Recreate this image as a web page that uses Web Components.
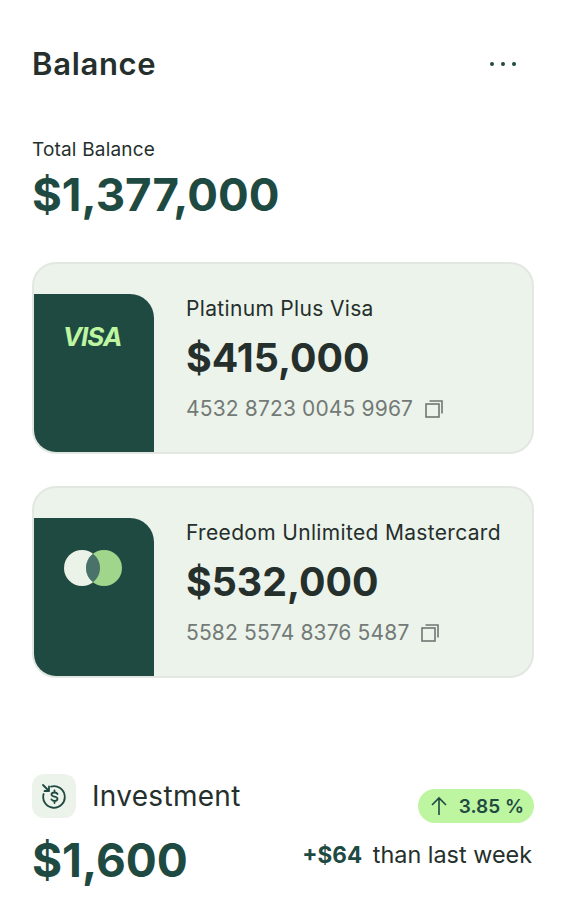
<!DOCTYPE html>
<html lang="en">
<head>
<meta charset="utf-8">
<title>Balance</title>
<style>
  html, body { margin: 0; background: #fff; }
  body { font-family: Inter, "Liberation Sans", sans-serif; color: #252f2c; }
</style>
</head>
<body>
<balance-panel>
  <bank-card name="Platinum Plus Visa" amount="$415,000" number="4532 8723 0045 9967">
    <span slot="logo" class="visa" style="font:italic 700 26px/1 Inter,sans-serif;letter-spacing:-1px;margin-left:-2px;color:#bdf5a0">VISA</span>
  </bank-card>
  <bank-card name="Freedom Unlimited Mastercard" amount="$532,000" number="5582 5574 8376 5487">
    <svg slot="logo" style="margin-top:2px" width="58" height="36" viewBox="0 0 58 36">
      <circle cx="18" cy="18" r="18" fill="#ebf2e8"/>
      <circle cx="40" cy="18" r="18" fill="#9fd68c"/>
      <path d="M29 3.700a18 18 0 0 1 0 28.600a18 18 0 0 1 0-28.600z" fill="#4a716a"/>
    </svg>
  </bank-card>
  <invest-row></invest-row>
</balance-panel>

<script>
class BankCard extends HTMLElement {
  constructor() {
    super();
    this.attachShadow({ mode: "open" });
    this.shadowRoot.innerHTML = `
     <style>
        :host {
            display:flex;
            box-sizing:border-box;
            height:192px;
            background:#ecf3ea;
            border:2px solid #e3e7e2;
            border-radius:24px;
            padding-top:30px;
            overflow:hidden;
        }
        #logo {
            flex:none;
            box-sizing:border-box;
            width:120px;
            background:#1f4a42;
            border-radius:0 24px 0 0;
            padding:30px 2px 0 0;
            display:flex;
            justify-content:center;
            align-items:flex-start;
        }
        #info {
            margin-left:32px;
            white-space:nowrap;
        }
        #name {
            font-size:21px;
            font-weight:400;
            letter-spacing:.33px;
            line-height:28px;
            margin-top:1px;
            color:#252f2c;
        }
        #amount {
            font-size:39.300px;
            line-height:48px;
            font-weight:700;
            margin-top:11px;
            color:#252f2c;
        }
        #number {
            display:flex;
            align-items:center;
            gap:12px;
            font-size:21px;
            font-weight:400;
            letter-spacing:.15px;
            line-height:28px;
            margin-top:13px;
            color:#737a77;
        }
     </style>
     <div id="logo"><slot name="logo"></slot></div>
     <div id="info">
        <div id="name">${this.getAttribute("name")}</div>
        <div id="amount">${this.getAttribute("amount")}</div>
        <div id="number">
            <span>${this.getAttribute("number")}</span>
            <svg width="18" height="18" viewBox="0 0 18 18" fill="none" stroke="#6f7673" stroke-width="1.600">
              <rect x="1" y="4" width="13" height="13"/>
              <path d="M4.500 1h12.500v12.500"/>
            </svg>
        </div>
     </div>
    `;
  }
}

class InvestRow extends HTMLElement {
  constructor() {
    super();
    this.attachShadow({ mode: "open" });
    this.shadowRoot.innerHTML = `
     <style>
        :host {
            display:flex;
            justify-content:space-between;
            margin-top:96px;
        }
        #label {
            display:flex;
            align-items:center;
            gap:16px;
            font-size:28px;
            font-weight:400;
            letter-spacing:.3px;
            line-height:44px;
            color:#252f2c;
        }
        #icon {
            width:44px;
            height:44px;
            border-radius:12px;
            background:#ecf3ea;
            display:flex;
            align-items:center;
            justify-content:center;
        }
        #value {
            font-size:46px;
            line-height:56px;
            font-weight:700;
            color:#1f4a42;
            margin-top:14px;
        }
        #right {
            display:flex;
            flex-direction:column;
            align-items:flex-end;
            padding-top:15px;
        }
        #pill {
            display:flex;
            align-items:center;
            gap:11px;
            height:34px;
            padding:0 10px 0 12px;
            border-radius:17px;
            background:#bdf5a0;
            color:#1f4a42;
            font-size:19px;
            font-weight:600;
        }
        #delta {
            font-size:23.400px;
            font-weight:400;
            line-height:30px;
            margin-top:17px;
            margin-right:2px;
            color:#252f2c;
        }
        #delta b { color:#1f4a42; font-size:22.500px; font-weight:700; margin-right:4px; }
     </style>
     <div>
        <div id="label">
            <div id="icon">
              <svg width="26" height="26" viewBox="0 0 26 26" fill="none" stroke="#1f4a42" stroke-width="1.800" stroke-linecap="round" stroke-linejoin="round">
                <path d="M10 3.600A10.800 10.800 0 1 1 2.600 11"/>
                <path d="M2 2l6 6M8 3.500V8H3.500"/>
                <path d="M16.500 11c-.5-1-1.500-1.500-3-1.500-1.700 0-3 .8-3 2.100 0 2.900 6 1.300 6 4.200 0 1.300-1.300 2.200-3 2.200-1.500 0-2.600-.6-3.100-1.600M13.500 7.500v2M13.500 18v2"/>
              </svg>
            </div>
            Investment
        </div>
        <div id="value">$1,600</div>
     </div>
     <div id="right">
        <div id="pill">
            <svg width="18" height="20" viewBox="0 0 18 20" fill="none" stroke="#1f4a42" stroke-width="1.600">
              <path d="M9 19V2M2 9l7-7 7 7"/>
            </svg>
            3.85 %
        </div>
        <div id="delta"><b>+$64</b> than last week</div>
     </div>
    `;
  }
}

class BalancePanel extends HTMLElement {
  constructor() {
    super();
    this.attachShadow({ mode: "open" });
    this.shadowRoot.innerHTML = `
     <style>
        :host {
            display:block;
            box-sizing:border-box;
            width:566px;
            height:918px;
            padding:44px 32px 0;
            overflow:hidden;
        }
        header {
            display:flex;
            justify-content:space-between;
            align-items:center;
            height:40px;
        }
        h1 {
            margin:0;
            font-size:31px;
            letter-spacing:.7px;
            line-height:40px;
            font-weight:600;
            color:#252f2c;
        }
        #more {
            display:flex;
            gap:7px;
            margin-right:18px;
        }
        #more i {
            width:4px;
            height:4px;
            border-radius:50%;
            background:#1f4a42;
        }
        #label {
            font-size:19px;
            font-weight:400;
            letter-spacing:.18px;
            line-height:26px;
            margin-top:53px;
            color:#252f2c;
        }
        #total {
            font-size:45.600px;
            line-height:56px;
            font-weight:700;
            color:#1f4a42;
            margin-top:4px;
            margin-bottom:39px;
        }
        ::slotted(bank-card) { margin-bottom:32px; }
     </style>
     <header>
        <h1>Balance</h1>
        <div id="more"><i></i><i></i><i></i></div>
     </header>
     <div id="label">Total Balance</div>
     <div id="total">$1,377,000</div>
     <slot></slot>
    `;
  }
}

customElements.define("bank-card", BankCard);
customElements.define("invest-row", InvestRow);
customElements.define("balance-panel", BalancePanel);
</script>
</body>
</html>
